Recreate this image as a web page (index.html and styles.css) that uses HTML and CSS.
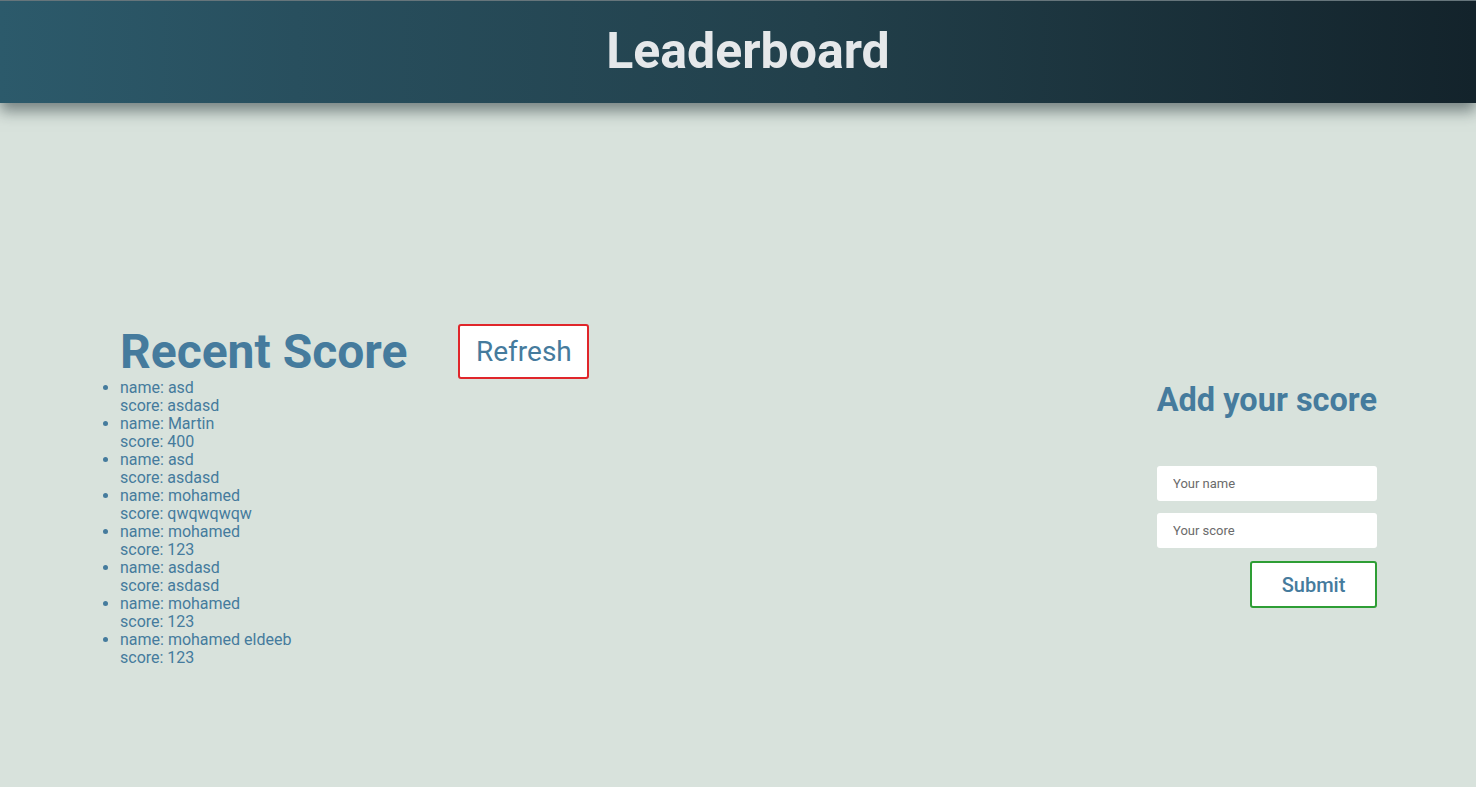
FILE: index.html
```html
<!DOCTYPE html>
<html lang="en">
<head>
<meta charset="utf-8">
<title>Leaderboard</title>
<link rel="stylesheet" href="styles.css">
</head>
<body>
<header class="topbar">
  <h1 class="title">Leaderboard</h1>
</header>
<main class="main">
  <section class="scores">
    <div class="scores-head">
      <h2 class="scores-title">Recent Score</h2>
      <button class="btn-refresh" type="button">Refresh</button>
    </div>
    <ul class="score-list">
      <li>name: asd<br>score: asdasd</li>
      <li>name: Martin<br>score: 400</li>
      <li>name: asd<br>score: asdasd</li>
      <li>name: mohamed<br>score: qwqwqwqw</li>
      <li>name: mohamed<br>score: 123</li>
      <li>name: asdasd<br>score: asdasd</li>
      <li>name: mohamed<br>score: 123</li>
      <li>name: mohamed eldeeb<br>score: 123</li>
    </ul>
  </section>
  <section class="add">
    <h2 class="add-title">Add your score</h2>
    <form class="add-form">
      <input class="field" type="text" placeholder="Your name">
      <input class="field" type="text" placeholder="Your score">
      <button class="btn-submit" type="button">Submit</button>
    </form>
  </section>
</main>
</body>
</html>
```
FILE: styles.css
```css
* { box-sizing: border-box; }
html, body { margin: 0; padding: 0; }
body {
  background: #d8e2dc;
  font-family: Roboto, "Noto Sans", sans-serif;
  color: #457b9d;
  min-height: 787px;
}
.topbar {
  height: 103px;
  background: linear-gradient(90deg, #2c5a6b 0%, #284f5e 20%, #22404b 55%, #13232b 100%);
  border-top: 1px solid #66757b;
  box-shadow: 0 8px 14px rgba(20, 35, 40, 0.5);
  display: flex;
  align-items: center;
  justify-content: center;
  padding-left: 20px;
  position: relative;
}
.title {
  margin: 0;
  font-size: 50px;
  font-weight: 700;
  color: #e5e8ea;
  line-height: 1;
  padding-bottom: 2px;
}
.main {
  display: flex;
  justify-content: space-between;
  align-items: center;
  padding: 220px 99px 0 80px;
}
.scores-head {
  display: flex;
  align-items: center;
  padding-left: 40px;
  gap: 51px;
}
.scores-title {
  margin: 0;
  font-size: 48px;
  font-weight: 700;
  line-height: 54px;
  padding-top: 2px;
  color: #457b9d;
}
.btn-refresh {
  width: 131px;
  height: 55px;
  background: #fff;
  border: 2px solid #e0262b;
  border-radius: 3px;
  font-family: Roboto, sans-serif;
  font-size: 28px;
  color: #457b9d;
  padding: 0;
}
.score-list {
  margin: 0;
  padding-left: 40px;
  font-size: 16px;
  line-height: 18px;
}
.add {
  display: flex;
  flex-direction: column;
  align-items: flex-end;
  margin-bottom: 1px;
}
.add-title {
  margin: 0 0 47px;
  font-size: 32.5px;
  font-weight: 700;
  line-height: 38px;
  color: #457b9d;
}
.add-form {
  display: flex;
  flex-direction: column;
  align-items: flex-end;
  gap: 12px;
  width: 220px;
}
.field {
  width: 220px;
  height: 35px;
  border: none;
  border-radius: 3px;
  background: #fff;
  padding: 0 16px;
  font-family: Roboto, sans-serif;
  font-size: 13px;
  color: #333;
}
.field::placeholder { color: #6b6b6b; }
.btn-submit {
  margin-top: 1px;
  width: 127px;
  height: 47px;
  background: #fff;
  border: 2px solid #2e9e35;
  border-radius: 3px;
  font-family: Roboto, sans-serif;
  font-size: 20px;
  font-weight: 500;
  color: #457b9d;
  padding: 0;
}
```
